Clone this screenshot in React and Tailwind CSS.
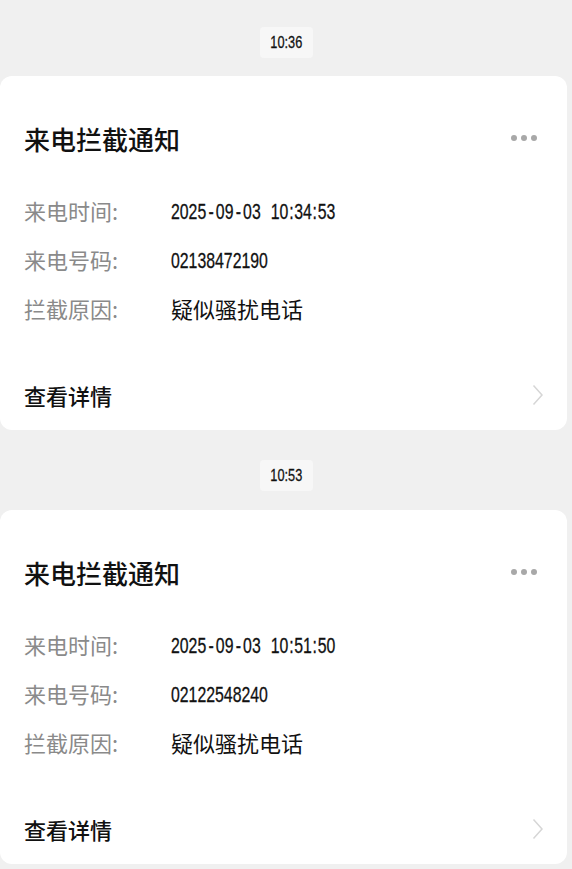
import React from 'react';

const cjk = { fontFamily: '"Noto Sans CJK SC", "Noto Sans", sans-serif' };
const digits = { fontFamily: '"Liberation Sans", Arial, "Noto Sans CJK SC", sans-serif' };

const notices = [
  { time: '10:36', date: '2025-09-03', clock: '10:34:53', phone: '02138472190', reason: '疑似骚扰电话' },
  { time: '10:53', date: '2025-09-03', clock: '10:51:50', phone: '02122548240', reason: '疑似骚扰电话' },
];

const Row = ({ label, children }) => (
  <div className="flex items-center h-[49px]">
    <span className="w-[147px] shrink-0 text-[22px] text-[#8a8a8a]" style={cjk}>{label}</span>
    {children}
  </div>
);

// digits in the picture are a condensed face; squeeze Arial to match
const Num = ({ children }) => (
  <span
    className="inline-block whitespace-nowrap origin-left scale-x-[0.72] translate-y-[1px] text-[22px] text-[#111] [-webkit-text-stroke:0.3px_#111]"
    style={digits}
  >
    {children}
  </span>
);

const Sep = ({ ch }) => <span className="inline-block px-[3px]">{ch}</span>;

const DateTime = ({ date, clock }) => {
  const [y, m, d] = date.split('-');
  const [h, mi, s] = clock.split(':');
  return (
    <Num>
      {y}<Sep ch="-" />{m}<Sep ch="-" />{d}
      <span className="inline-block w-[14px]" />
      {h}<span className="px-[1px]">:</span>{mi}<span className="px-[1px]">:</span>{s}
    </Num>
  );
};

const Notice = ({ item, first }) => (
  <div>
    <div className={`flex justify-center ${first ? 'pt-[27px] pb-[18px]' : 'pt-[30px] pb-[19px]'}`}>
      <div className="w-[53px] h-[31px] flex items-center justify-center rounded-[4px] bg-[#f7f7f7]">
        <span className="inline-block scale-x-[0.75] text-[17px] text-[#111] [-webkit-text-stroke:0.3px_#111]" style={digits}>
          {item.time}
        </span>
      </div>
    </div>
    <div className="mr-[5px] bg-white rounded-[12px] px-[24px] pt-[45px] pb-[18px]">
      <div className="flex items-center justify-between h-[34px]">
        <h2 className="text-[26px] font-medium text-[#111]" style={cjk}>来电拦截通知</h2>
        <div className="flex gap-[4px] mr-[6px]">
          <span className="w-[6px] h-[6px] rounded-full bg-[#a8a8a8]" />
          <span className="w-[6px] h-[6px] rounded-full bg-[#a8a8a8]" />
          <span className="w-[6px] h-[6px] rounded-full bg-[#a8a8a8]" />
        </div>
      </div>
      <div className="mt-[31px]">
        <Row label="来电时间:">
          <DateTime date={item.date} clock={item.clock} />
        </Row>
        <Row label="来电号码:">
          <Num>{item.phone}</Num>
        </Row>
        <Row label="拦截原因:">
          <span className="text-[22px] text-[#111]" style={cjk}>{item.reason}</span>
        </Row>
      </div>
      <div className="mt-[45px] h-[34px] flex items-center justify-between">
        <span className="text-[22px] font-medium text-[#111]" style={cjk}>查看详情</span>
        <svg width="12" height="22" viewBox="0 0 12 22" fill="none" className="mr-[-1px]">
          <path d="M1.5 1.5 L10 11 L1.5 20.5" stroke="#d6d6d6" strokeWidth="1.5" />
        </svg>
      </div>
    </div>
  </div>
);

export default function App() {
  return (
    <div className="min-h-[869px] bg-[#f0f0f0] overflow-hidden">
      {notices.map((n, i) => (
        <Notice key={n.time} item={n} first={i === 0} />
      ))}
    </div>
  );
}
